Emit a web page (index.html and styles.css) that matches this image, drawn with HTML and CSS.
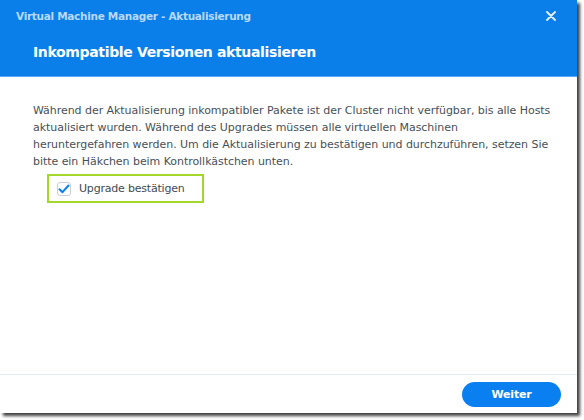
FILE: index.html
```html
<!DOCTYPE html>
<html>
<head>
<meta charset="utf-8">
<link rel="stylesheet" href="styles.css">
</head>
<body>
<div class="frame">
  <div class="dialog">
    <div class="header">
      <div class="titlebar">
        <span class="title">Virtual Machine Manager - Aktualisierung</span>
        <svg class="close" width="10" height="10" viewBox="0 0 10 10"><path d="M1 1L9 9M9 1L1 9" stroke="#e6f1fd" stroke-width="1.8" stroke-linecap="round"/></svg>
      </div>
      <h1 class="heading">Inkompatible Versionen aktualisieren</h1>
    </div>
    <div class="content">
      <p class="desc">Während der Aktualisierung inkompatibler Pakete ist der Cluster nicht verfügbar, bis alle Hosts<br>aktualisiert wurden. Während des Upgrades müssen alle virtuellen Maschinen<br>heruntergefahren werden. Um die Aktualisierung zu bestätigen und durchzuführen, setzen Sie<br>bitte ein Häkchen beim Kontrollkästchen unten.</p>
      <label class="confirm">
        <span class="box"><svg width="12" height="10" viewBox="0 0 12 10"><path d="M1.5 5.2L4.5 8.2L10.5 1.5" fill="none" stroke="#0a7ff0" stroke-width="2" stroke-linecap="round" stroke-linejoin="round"/></svg></span>
        <span class="label">Upgrade bestätigen</span>
      </label>
    </div>
    <div class="footer">
      <button class="next">Weiter</button>
    </div>
  </div>
</div>
</body>
</html>
```

FILE: styles.css
```css
html, body {
  margin: 0;
  padding: 0;
  background: #ffffff;
}
.frame {
  width: 584px;
  height: 420px;
  position: relative;
}
.dialog {
  width: 577px;
  height: 413px;
  background: #ffffff;
  display: flex;
  flex-direction: column;
  box-shadow: 3px 3px 3px rgba(0,0,0,0.75);
  font-family: "DejaVu Sans", Verdana, sans-serif;
}
.header {
  background: #0a7fe9;
  height: 76px;
  border-bottom: 1px solid #58a9f3;
  padding: 0 0 0 16px;
  box-sizing: content-box;
}
.titlebar {
  display: flex;
  align-items: center;
  justify-content: space-between;
  height: 32px;
  padding-right: 21px;
}
.title {
  color: #b9d9fb;
  font-size: 10.5px;
  font-weight: bold;
  letter-spacing: -0.3px;
}
.close {
  display: block;
}
.heading {
  margin: 8px 0 0 17px;
  color: #ffffff;
  font-size: 14px;
  font-weight: bold;
  letter-spacing: -0.35px;
  line-height: 24px;
}
.content {
  flex: 1;
  padding: 25px 10px 0 33px;
}
.desc {
  margin: 0;
  color: #475059;
  font-size: 11px;
  letter-spacing: -0.05px;
  line-height: 17px;
  white-space: nowrap;
}
.confirm {
  margin: 4px 0 0 14px;
  width: 145px;
  height: 25px;
  border: 2px solid #a3d72c;
  display: flex;
  align-items: center;
  padding-left: 8px;
  gap: 8px;
}
.box {
  width: 14px;
  height: 14px;
  border: 1px solid #c7d0da;
  border-radius: 3px;
  display: flex;
  align-items: center;
  justify-content: center;
  box-sizing: border-box;
}
.label {
  color: #414b55;
  font-size: 11px;
  letter-spacing: -0.2px;
}
.footer {
  border-top: 1px solid #e6ecf3;
  height: 38px;
  display: flex;
  justify-content: flex-end;
  align-items: center;
  padding-right: 16px;
}
.next {
  width: 99px;
  height: 25px;
  border: none;
  border-radius: 13px;
  background: #0a80f0;
  color: #ffffff;
  font-family: "DejaVu Sans", Verdana, sans-serif;
  font-weight: bold;
  font-size: 11px;
  letter-spacing: -0.2px;
  margin-top: 1px;
}
```
